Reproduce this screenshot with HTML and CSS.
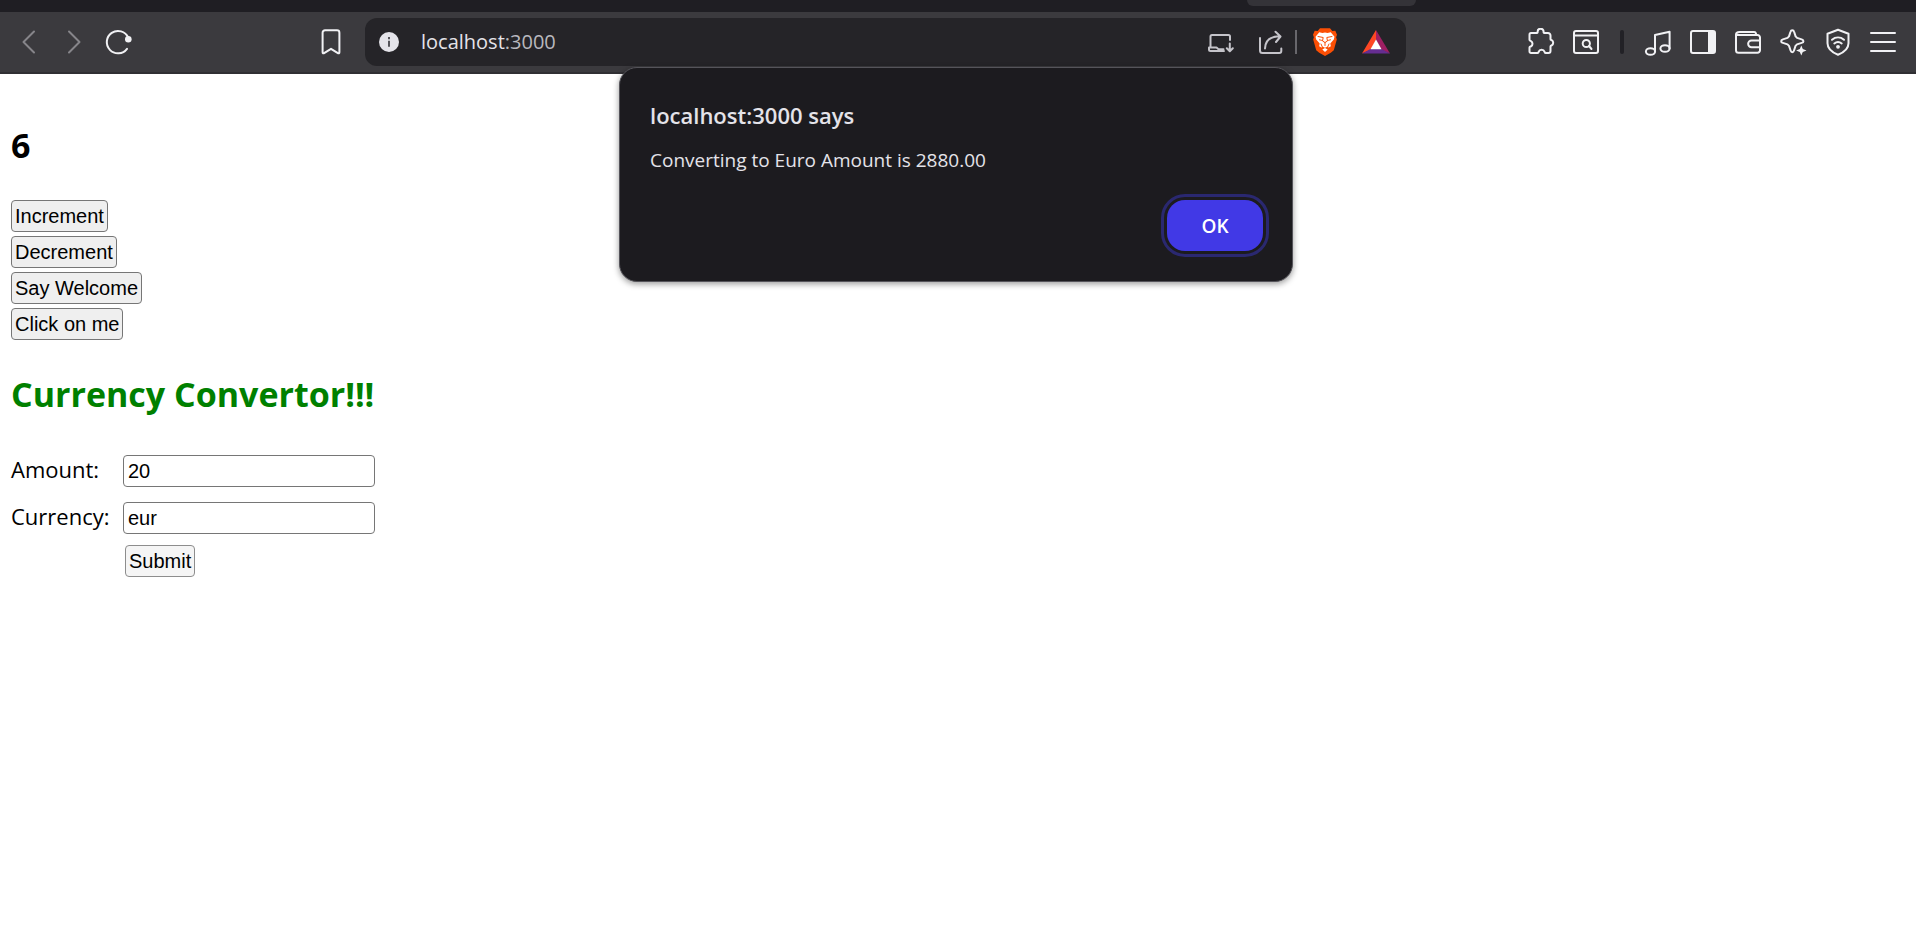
FILE: index.html
```html
<!DOCTYPE html>
<html lang="en">
<head>
<meta charset="utf-8">
<title>localhost:3000</title>
<link rel="stylesheet" href="styles.css">
</head>
<body>
<header class="browser">
  <div class="tabstrip"><div class="tab"></div></div>
  <div class="toolbar">
    <nav class="nav-group">
      <button class="icon-btn dim" aria-label="Back"><svg viewBox="0 0 28 28"><path d="M19 3.500 8.500 14 19 24.500"/></svg></button>
      <button class="icon-btn dim" aria-label="Forward"><svg viewBox="0 0 28 28"><path d="M9 3.500 19.500 14 9 24.500"/></svg></button>
      <button class="icon-btn" aria-label="Reload"><svg viewBox="0 0 28 28"><path d="M23.200 9.500A11.200 11.200 0 1 0 22 20.800"/><circle class="solid" cx="23.300" cy="11.200" r="3.300"/></svg></button>
      <button class="icon-btn bookmark" aria-label="Bookmark"><svg viewBox="0 0 28 28"><path d="M8 2.300h12a2.400 2.400 0 0 1 2.400 2.400v19.600c0 1-.8 1.300-1.500.8L14 20.800l-6.900 4.300c-.7.500-1.500.2-1.500-.8V4.700A2.400 2.400 0 0 1 8 2.300z"/></svg></button>
    </nav>
    <div class="address">
      <button class="icon-btn" aria-label="Site information"><svg viewBox="0 0 28 28"><circle class="info" cx="14" cy="14" r="10"/><path class="info-mark" d="M14 9v2.200M14 12.800v6"/></svg></button>
      <div class="url">localhost<span class="port">:3000</span></div>
      <div class="address-actions">
        <button class="icon-btn soft" aria-label="Install app"><svg viewBox="0 0 28 28"><path d="M4.500 18.500V8.500A1.500 1.500 0 0 1 6 7h16.500A1.500 1.500 0 0 1 24 8.500V12M3 19.500h7.500l2 1.700h5M3 19.500v2A1.500 1.500 0 0 0 4.500 23H18M23.800 15.500V23M20.800 20.200l3 3 3-3"/></svg></button>
        <button class="icon-btn soft" aria-label="Share"><svg viewBox="0 0 28 28"><path d="M3 10v12.500A2.500 2.500 0 0 0 5.500 25h16.800a2 2 0 0 0 2-2v-2.500M8 20.500C8.200 13 13 8.500 23 8.300M18.500 3.800 23.500 8.500 19 14"/></svg></button>
        <span class="divider"></span>
        <button class="icon-btn" aria-label="Brave Shields"><svg viewBox="0 0 28 28"><path class="brave" d="M9 .3h10l2.300 2.600 3-.1 1.700 4-.9 2.400.7 2.300-3 10.800-3 2.500-5.800 3.200-5.800-3.200-3-2.500-3-10.800.7-2.300L2 6.800l1.700-4 3 .1z"/><path class="face" d="m8.300 4.300 3.100.6 2.600-.5 2.600.5 3.100-.6 3.800 4.500-.7 2.600-3.500 4.200.6 2.700-2.300 1.300-1.500-.8-2.100.9-2.100-.9-1.500.8-2.300-1.300.6-2.700-3.500-4.200-.7-2.600zM14 20l2.700 1.600L14 24l-2.700-2.400z"/><path class="face-line" d="m7 8.500 5.200 1-.7 3.500 2.500 1.500 2.500-1.500-.7-3.500 5.200-1M14 14.500v3M10 16l1.500 3.300M18 16l-1.500 3.300M8.500 11.800l2 .5M19.500 11.800l-2 .5"/></svg></button>
        <button class="icon-btn rewards" aria-label="Brave Rewards"><svg viewBox="0 0 28 28"><path class="bat-a" d="M14 2v10L9 21.500 0 25.500z"/><path class="bat-b" d="M14 2v10l5 9.500 9 4z"/><path class="bat-c" d="m0 25.500 9-4.700h10l9 4.700z"/><path class="bat-d" d="m14 11.500 5.500 9.800h-11z"/></svg></button>
      </div>
    </div>
    <div class="tool-group">
      <button class="icon-btn" aria-label="Extensions"><svg viewBox="0 0 28 28"><path d="M4 5h5.800c1 0 .8-1 .8-1.300a3 3 0 0 1 6 0c0 .3-.2 1.300.8 1.300H21a2.500 2.500 0 0 1 2.500 2.500v3.700c0 1 1 .8 1.200 1a3 3 0 0 1 0 5.200c-.3.200-1.200.2-1.200 1.200V23a2 2 0 0 1-2 2h-3c-1 0-.8-.8-.9-1.200a3.200 3.200 0 0 0-6 0c-.1.400 0 1.200-1 1.200H4a1.500 1.500 0 0 1-1.500-1.500v-4c0-1 1-.9 1.500-1.200a3 3 0 0 0 0-5.200c-.5-.3-1.500-.3-1.500-1.300v-5C2.500 5.800 3 5 4 5z"/></svg></button>
      <button class="icon-btn" aria-label="Search tabs"><svg viewBox="0 0 28 28"><rect x="2" y="3" width="24" height="22" rx="2"/><path d="M2 7.500h24M17 18l2.500 3"/><circle cx="14.300" cy="15.500" r="3.600"/></svg></button>
      <span class="divider dark"></span>
      <button class="icon-btn" aria-label="Media"><svg viewBox="0 0 28 28"><ellipse cx="6.500" cy="23.500" rx="4.600" ry="3.300"/><ellipse cx="21" cy="20.500" rx="4.600" ry="3.300"/><path d="M11 23.500V7l14.600-3.300v16.800"/></svg></button>
      <button class="icon-btn" aria-label="Sidebar"><svg viewBox="0 0 28 28"><rect x="2" y="3" width="24" height="22" rx="2"/><path class="solid" d="M19 3h5.500L26 4.500v19L24.500 25H19z"/></svg></button>
      <button class="icon-btn" aria-label="Wallet"><svg viewBox="0 0 28 28"><path d="M22 7V5.500A2 2 0 0 0 20 4H5.500C3.500 4 2 5 2 6.500M2 6.500v15.800A2.500 2.500 0 0 0 4.500 24.800h19a2.500 2.500 0 0 0 2.500-2.500V9.500A2.500 2.500 0 0 0 23.500 7H4C2.800 7 2 6.500 2 6.500zM26 12.500h-8.500a3.300 3.300 0 0 0 0 6.700H26"/></svg></button>
      <button class="icon-btn" aria-label="Leo AI"><svg viewBox="0 0 28 28"><path d="M13.300 2.300c.9 0 1.500.5 1.800 1.500l1.500 4.600 1.500 1.500 4.600 1.500c2.300.8 2.300 2.800 0 3.500L18 16.400l-1.500 1.500-1.500 4.600c-.7 2.300-2.700 2.300-3.400 0L10 17.900l-1.500-1.500-4.600-1.500c-2.300-.7-2.300-2.700 0-3.500l4.600-1.500L10 8.400l1.500-4.600c.3-1 .9-1.500 1.800-1.500z"/><path class="spark" d="m22.300 17.500 1.500 3.500 3.700 1.500-3.700 1.500-1.500 3.500-1.500-3.500-3.700-1.500 3.700-1.500z"/></svg></button>
      <button class="icon-btn" aria-label="VPN"><svg viewBox="0 0 28 28"><path d="m14 1.800 10.500 4v9.400c0 5-5 9.300-10.500 11.500C8.500 24.500 3.500 20.200 3.500 15.200V5.800zM8 11.800c3.600-3 8.400-3 12 0M10.300 15.500c2.300-1.800 5.100-1.800 7.400 0"/><circle class="spark" cx="14" cy="18.800" r="1.900"/></svg></button>
      <button class="icon-btn" aria-label="Menu"><svg viewBox="0 0 28 28"><path d="M2 5h24M2 14h24M2 23h24"/></svg></button>
    </div>
  </div>
</header>

<main class="page">
  <h1 class="heading">6</h1>
  <div class="actions">
    <button class="btn">Increment</button>
    <button class="btn">Decrement</button>
    <button class="btn">Say Welcome</button>
    <button class="btn">Click on me</button>
  </div>
  <h1 class="heading green">Currency Convertor!!!</h1>
  <form class="converter">
    <div class="row"><label for="amount">Amount:</label><input class="field" id="amount" type="text" value="20"></div>
    <div class="row"><label for="currency">Currency:</label><input class="field" id="currency" type="text" value="eur"></div>
    <button class="btn submit" type="button">Submit</button>
  </form>
</main>

<div class="dialog" role="alertdialog" aria-labelledby="dialog-title">
  <h2 class="dialog-title" id="dialog-title">localhost:3000 says</h2>
  <p class="dialog-text">Converting to Euro Amount is 2880.00</p>
  <button class="ok">OK</button>
</div>
</body>
</html>
```
FILE: styles.css
```css
* { box-sizing: border-box; }

body {
  margin: 0;
  background: #fff;
  color: #000;
  font-family: "Open Sans", "Noto Sans", sans-serif;
}

.tabstrip { height: 12px; background: #1f1e23; }

.tab {
  width: 169px;
  height: 6px;
  margin-left: 65.1%;
  background: #343338;
  border-radius: 0 0 10px 10px;
}

.toolbar {
  display: grid;
  grid-template-columns: 365px minmax(0, 1fr) 510px;
  align-items: center;
  height: 62px;
  background: #3b3a3e;
  border-bottom: 2px solid #302f33;
}

.nav-group { display: flex; gap: 17px; padding: 0 20px 0 15px; }
.bookmark { margin-left: auto; }

.icon-btn {
  width: 28px;
  height: 28px;
  padding: 0;
  border: 0;
  background: none;
  color: #f1f1f4;
}
.icon-btn svg {
  display: block;
  width: 28px;
  height: 28px;
  fill: none;
  stroke: currentColor;
  stroke-width: 2;
  stroke-linecap: round;
  stroke-linejoin: round;
}
.icon-btn.dim { color: #86858a; }
.icon-btn.soft { color: #c5c4ca; }
.icon-btn .solid, .icon-btn .spark { fill: currentColor; stroke: none; }
.icon-btn .info { fill: #e5e4ea; stroke: none; }
.icon-btn .info-mark { stroke: #55545a; stroke-linecap: butt; }
.icon-btn .brave { fill: #fb4f05; stroke: none; }
.icon-btn .face { fill: #fff; stroke: none; }
.icon-btn .face-line { stroke: #fb4f05; stroke-width: 1; }
.icon-btn .bat-a { fill: #ff4724; stroke: none; }
.icon-btn .bat-b { fill: #9e1f63; stroke: none; }
.icon-btn .bat-c { fill: #662d91; stroke: none; }
.icon-btn .bat-d { fill: #fff; stroke: none; }

.address {
  display: flex;
  align-items: center;
  height: 48px;
  padding: 0 16px 0 10px;
  background: #252428;
  border-radius: 12px;
}
.url {
  flex: 1;
  padding-left: 18px;
  color: #e4e3e9;
  font-size: 20px;
  line-height: 28px;
}
.port { color: #b9b8be; }

.address-actions { display: flex; align-items: center; }
.address-actions .soft { margin-right: 23px; }
.address-actions .soft + .soft { margin-right: 10px; }
.divider { width: 2px; height: 24px; margin-right: 14px; background: #68676c; }
.rewards { margin-left: 23px; }

.tool-group {
  display: flex;
  align-items: center;
  justify-content: flex-end;
  gap: 17px;
  padding-right: 19px;
}
.divider.dark { width: 4px; margin: 0 3px; background: #222126; border-radius: 2px; }

.page { padding: 47px 11px; }

.heading { margin: 0; font-size: 34px; line-height: 48px; font-weight: 700; }
.green { margin-top: 30px; color: #008000; }

.actions {
  display: flex;
  flex-direction: column;
  align-items: flex-start;
  gap: 4px;
  margin-top: 31px;
}

.btn {
  height: 32px;
  padding: 0 3px;
  border: 1px solid #767676;
  border-radius: 4px;
  background: #efefef;
  color: #000;
  font: 20px "Liberation Sans", Arial, sans-serif;
}

.converter { display: grid; justify-content: start; margin-top: 37px; }
.row {
  display: grid;
  grid-template-columns: 112px 252px;
  align-items: center;
  margin-bottom: 15px;
  font-size: 22px;
  line-height: 28px;
}
.row label { padding-bottom: 4px; }
.field {
  width: 100%;
  height: 32px;
  padding: 0 4px;
  border: 1px solid #767676;
  border-radius: 4px;
  background: #fff;
  font: 20px "Liberation Sans", Arial, sans-serif;
}
.submit { justify-self: start; margin: -4px 0 0 114px; background: #f5f5f5; border-color: #8d8d8d; }

.dialog {
  position: absolute;
  top: 67px;
  left: 50%;
  display: flex;
  flex-direction: column;
  width: 674px;
  min-height: 215px;
  margin-left: -339px;
  padding: 32px 29px 30px 30px;
  background: #1c1b1f;
  border: 1px solid #55545a;
  border-radius: 18px;
  box-shadow: 0 2px 6px rgba(0, 0, 0, 0.4);
  color: #e4e3e9;
}
.dialog-title { margin: 0; font-size: 22px; line-height: 30px; font-weight: 600; }
.dialog-text { margin: 17px 0 0; font-size: 19px; line-height: 26px; }
.ok {
  align-self: flex-end;
  width: 96px;
  height: 51px;
  margin-top: auto;
  border: 0;
  border-radius: 18px;
  outline: 3px solid #2a2870;
  outline-offset: 3px;
  background: #4139e6;
  color: #fff;
  font: 600 19px "Open Sans", "Noto Sans", sans-serif;
}
```
